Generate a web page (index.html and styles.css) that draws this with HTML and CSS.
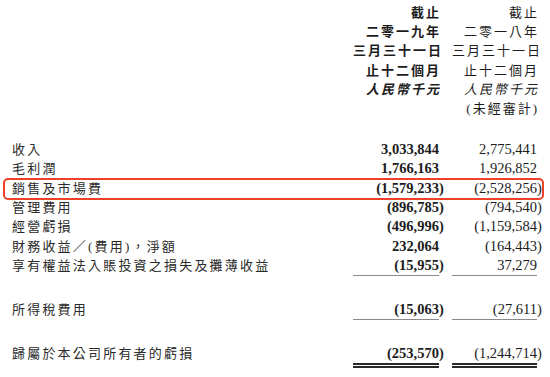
FILE: index.html
```html
<!DOCTYPE html>
<html lang="zh-Hant">
<head>
<meta charset="utf-8">
<title>Income statement</title>
<link rel="stylesheet" href="styles.css">
</head>
<body>
<div class="sheet">
  <div class="head">
    <div class="row"><span></span><span class="h b"><span class="t">截止</span></span><span class="h"><span class="t">截止</span></span></div>
    <div class="row"><span></span><span class="h b"><span class="t">二零一九年</span></span><span class="h"><span class="t">二零一八年</span></span></div>
    <div class="row"><span></span><span class="h b"><span class="t">三月三十一日</span></span><span class="h"><span class="t">三月三十一日</span></span></div>
    <div class="row"><span></span><span class="h b"><span class="t">止十二個月</span></span><span class="h"><span class="t">止十二個月</span></span></div>
    <div class="row"><span></span><span class="h b i"><span class="t">人民幣千元</span></span><span class="h i"><span class="t">人民幣千元</span></span></div>
    <div class="row"><span></span><span></span><span class="h"><span class="t">(未經審計)</span></span></div>
  </div>
  <div class="body">
    <div class="row"><span class="label">收入</span><span class="num b">3,033,844</span><span class="num">2,775,441</span></div>
    <div class="row"><span class="label">毛利潤</span><span class="num b">1,766,163</span><span class="num">1,926,852</span></div>
    <div class="row mark"><span class="label">銷售及市場費</span><span class="num b"><span class="neg">(1,579,233)</span></span><span class="num"><span class="neg">(2,528,256)</span></span></div>
    <div class="row"><span class="label">管理費用</span><span class="num b"><span class="neg">(896,785)</span></span><span class="num"><span class="neg">(794,540)</span></span></div>
    <div class="row"><span class="label">經營虧損</span><span class="num b"><span class="neg">(496,996)</span></span><span class="num"><span class="neg">(1,159,584)</span></span></div>
    <div class="row"><span class="label">財務收益／(費用)，淨額</span><span class="num b">232,064</span><span class="num"><span class="neg">(164,443)</span></span></div>
    <div class="row ul"><span class="label">享有權益法入賬投資之損失及攤薄收益</span><span class="num b"><span class="neg">(15,955)</span></span><span class="num">37,279</span></div>
    <div class="row ul gap"><span class="label">所得稅費用</span><span class="num b"><span class="neg">(15,063)</span></span><span class="num"><span class="neg">(27,611)</span></span></div>
    <div class="row dul gap"><span class="label">歸屬於本公司所有者的虧損</span><span class="num b"><span class="neg">(253,570)</span></span><span class="num"><span class="neg">(1,244,714)</span></span></div>
  </div>
</div>
</body>
</html>
```
FILE: styles.css
```css
html, body {
  margin: 0;
  padding: 0;
  background: #ffffff;
}
body {
  color: #1c1c1c;
  font-family: "Liberation Serif", "Noto Sans CJK TC", serif;
  width: 550px;
  height: 377px;
  overflow: hidden;
}
.sheet {
  padding: 2.5px 13px 0 12px;
}
.row {
  display: grid;
  grid-template-columns: 1fr 86px 85px;
  column-gap: 13px;
  line-height: 19.4px;
  position: relative;
}
.row > span {
  height: 19.4px;
  white-space: nowrap;
}
.h {
  text-align: right;
  font-size: 13px;
  letter-spacing: 2px;
}
.h .t {
  margin-right: -2px;
}
.b {
  font-weight: bold;
}
.i {
  font-style: italic;
}
.body {
  margin-top: 20.9px;
}
.label {
  font-size: 13px;
  letter-spacing: 2.2px;
  color: #2a2a2a;
}
.num {
  text-align: right;
  font-size: 14.5px;
}
.neg {
  margin-right: -0.333em;
}
.ul .num {
  border-bottom: 1px solid #8a8a8a;
}
.dul .num {
  border-bottom: 5px double #2a2a2a;
}
.gap {
  margin-top: 23.6px;
}
.mark::after {
  content: "";
  position: absolute;
  left: -9px;
  right: -7px;
  top: -1px;
  bottom: -2px;
  border: 2px solid #ef4128;
  border-radius: 5px;
  pointer-events: none;
}
```
